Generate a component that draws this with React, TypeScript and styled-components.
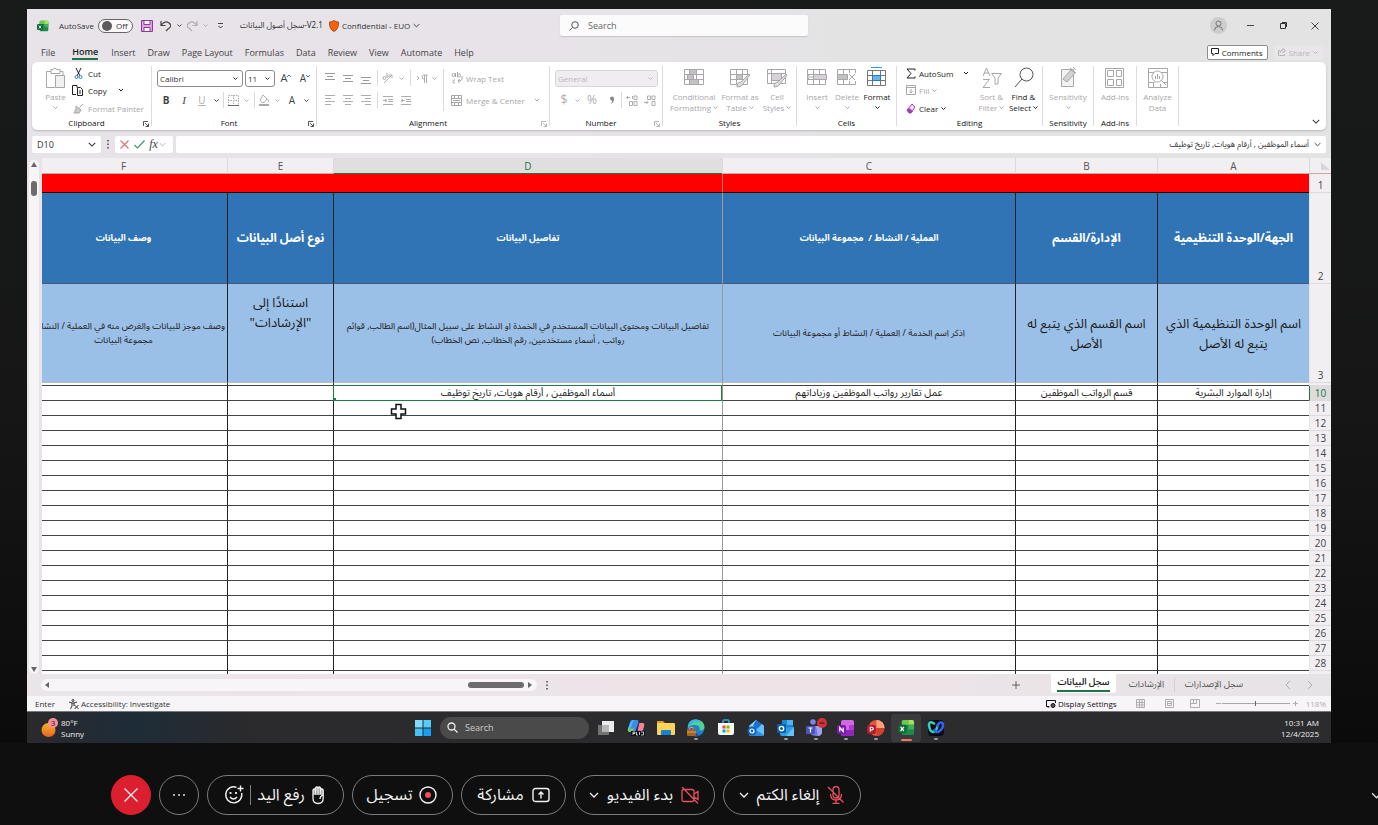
import React from "react";
import styled, { createGlobalStyle, css } from "styled-components";

const UI = `"Open Sans", "Noto Sans", "DejaVu Sans", sans-serif`;
const ARABIC = `"Noto Sans Arabic", "Noto Sans", "DejaVu Sans", sans-serif`;

const GlobalStyle = createGlobalStyle`
  *, *::before, *::after { box-sizing: border-box; }
  body { margin: 0; background: #0f0f0f; font-family: ${UI}; font-size: 8px; color: #333; }
  button, input, select { font: inherit; color: inherit; margin: 0; padding: 0; border: 0; background: none; }
  svg { display: block; flex: none; }
`;

/* ---------- page shell ---------- */
const Page = styled.div`
  height: 100vh;
  display: flex;
  flex-direction: column;
  overflow: hidden;
  background: linear-gradient(#181b1a, #161616 50%, #0b0b0b 90%, #0f0f0f 91%);
`;
const SharedScreen = styled.main`
  flex: 1;
  min-height: 0;
  margin: 9px 47px 0 27px;
  display: flex;
  flex-direction: column;
  background: linear-gradient(90deg, #e8e3e8, #e7e3e8 40%, #e3e3e3 70%);
`;

/* ---------- title bar ---------- */
const TitleBar = styled.header`
  height: 33px;
  padding-left: 10px;
  display: flex;
  align-items: center;
`;
const TitleSide = styled.div<{ $end?: boolean }>`
  flex: 1;
  display: flex;
  align-items: center;
  justify-content: ${(p) => (p.$end ? "flex-end" : "flex-start")};
`;
const AutoSave = styled.label`
  display: flex;
  align-items: center;
  gap: 4px;
  margin: 0 6px 0 10px;
`;
const Toggle = styled.span`
  position: relative;
  width: 35px;
  height: 14px;
  border: 1px solid #666;
  border-radius: 7px;
  background: #fbf9fb;
  line-height: 12px;
  padding-left: 17px;
  &::before {
    content: "";
    position: absolute;
    left: 3px;
    top: 1px;
    width: 10px;
    height: 10px;
    border-radius: 50%;
    background: #5e595e;
  }
`;
const HiddenCheck = styled.input`
  position: absolute;
  opacity: 0;
  width: 1px;
  height: 1px;
`;
const IconButton = styled.button<{ $w: number; $h?: number; $dim?: boolean }>`
  width: ${(p) => p.$w}px;
  height: ${(p) => p.$h ?? 16}px;
  display: flex;
  align-items: center;
  justify-content: center;
  color: ${(p) => (p.$dim ? "#b0acb0" : "#444")};
`;
const FileName = styled.h1`
  margin: 0 6px 0 7px;
  font: 8px ${ARABIC};
  white-space: nowrap;
`;
const LabelButton = styled.button`
  display: flex;
  align-items: center;
  gap: 3px;
  white-space: nowrap;
`;
const SearchBox = styled.label`
  width: 248px;
  height: 21px;
  display: flex;
  align-items: center;
  gap: 9px;
  padding-left: 9px;
  background: #fcfbfc;
  border-radius: 2px;
  box-shadow: 0 1px 1px #c6c2c6;
  font-size: 9px;
  input { flex: 1; outline: 0; }
  input::placeholder { color: #666; opacity: 1; }
`;

/* ---------- ribbon tabs ---------- */
const TabRow = styled.nav`
  height: 20px;
  padding: 0 8px 0 14px;
  display: flex;
  align-items: center;
  gap: 12px;
`;
const RibbonTab = styled.button<{ $active?: boolean }>`
  height: 16px;
  font-size: 9px;
  white-space: nowrap;
  color: #444;
  ${(p) =>
    p.$active &&
    css`
      font-weight: 600;
      color: #222;
      margin: 0 1px 0 5px;
      border-bottom: 2px solid #1e7145;
      padding-top: 1px;
    `}
`;
const CornerButton = styled.button<{ $dim?: boolean }>`
  height: 15px;
  padding: 0 4px 0 3px;
  display: flex;
  align-items: center;
  gap: 3px;
  border-radius: 2px;
  border: 1px solid ${(p) => (p.$dim ? "#e9e6e9" : "#8d8d8d")};
  background: ${(p) => (p.$dim ? "#e9e6e9" : "#fff")};
  color: ${(p) => (p.$dim ? "#b9b5b9" : "#222")};
`;
const CornerActions = styled.div`
  margin-left: auto;
  display: flex;
  gap: 6px;
`;

/* ---------- ribbon ---------- */
const Ribbon = styled.section`
  height: 68px;
  margin: 0 5px;
  display: flex;
  background: #fff;
  border-radius: 5px;
  box-shadow: 0 1px 2px #b9b5b9;
`;
const Group = styled.div<{ $w: number }>`
  position: relative;
  width: ${(p) => p.$w}px;
  flex: none;
  margin: 4px 0;
  border-right: 1px solid #dcdadc;
  display: flex;
  flex-direction: column;
`;
const GroupBody = styled.div<{ $pad?: number }>`
  height: 51px;
  flex: none;
  padding-left: ${(p) => p.$pad ?? 0}px;
  display: flex;
`;
const GroupName = styled.div<{ $launcher?: boolean }>`
  height: 12px;
  flex: none;
  padding-right: ${(p) => (p.$launcher ? 10 : 0)}px;
  line-height: 12px;
  color: #111;
  text-align: center;
`;
const Launcher = styled.button<{ $dim?: boolean }>`
  position: absolute;
  right: 2px;
  bottom: -1px;
  color: ${(p) => (p.$dim ? "#b5b5b5" : "#555")};
`;
const Stack = styled.div<{ $w?: number }>`
  width: ${(p) => (p.$w ? p.$w + "px" : "auto")};
  display: flex;
  flex-direction: column;
`;
const ToolRow = styled.div<{ $h?: number }>`
  height: ${(p) => p.$h ?? 22}px;
  display: flex;
  align-items: center;
`;
const BigButton = styled.button<{ $w: number; $dim?: boolean }>`
  width: ${(p) => p.$w}px;
  display: flex;
  flex-direction: column;
  align-items: center;
  line-height: 11px;
  white-space: nowrap;
  color: ${(p) => (p.$dim ? "#a9a6a9" : "#222")};
  > svg:first-child { margin: 1px 0 2px; }
`;
const Line = styled.span`
  height: 11px;
  display: flex;
  align-items: center;
  gap: 2px;
`;
const SmallButton = styled.button<{ $dim?: boolean; $h?: number }>`
  height: ${(p) => p.$h ?? 17}px;
  display: flex;
  align-items: center;
  gap: 3px;
  white-space: nowrap;
  color: ${(p) => (p.$dim ? "#a9a6a9" : "#222")};
`;
const Rule = styled.span<{ $h?: number }>`
  width: 1px;
  height: ${(p) => p.$h ?? 16}px;
  background: #dcdadc;
`;
const Picker = styled.label<{ $w: number; $dim?: boolean }>`
  width: ${(p) => p.$w}px;
  height: 17px;
  display: flex;
  align-items: center;
  padding: 0 4px 0 2px;
  border: 1px solid ${(p) => (p.$dim ? "#d9d6d9" : "#8d8a8d")};
  border-radius: 3px;
  background: ${(p) => (p.$dim ? "#efedef" : "#fff")};
  color: ${(p) => (p.$dim ? "#bbb8bb" : "#333")};
  select { flex: 1; min-width: 0; appearance: none; outline: 0; opacity: 1; }
`;
const Glyph = styled.span<{ $size?: number; $b?: boolean; $i?: boolean; $u?: boolean; $serif?: boolean }>`
  font-size: ${(p) => p.$size ?? 10}px;
  line-height: 14px;
  font-weight: ${(p) => (p.$b ? 700 : 400)};
  font-style: ${(p) => (p.$i ? "italic" : "normal")};
  text-decoration: ${(p) => (p.$u ? "underline" : "none")};
  font-family: ${(p) => (p.$serif ? `"Liberation Serif", serif` : "inherit")};
`;
const CollapseSlot = styled.div`
  margin-left: auto;
  padding: 0 6px 6px 0;
  display: flex;
  align-items: flex-end;
`;

/* ---------- formula bar ---------- */
const FormulaBar = styled.div`
  height: 28px;
  padding: 6px 5px;
  display: flex;
  align-items: center;
`;
const BarBox = styled.div<{ $w?: number }>`
  height: 17px;
  ${(p) => (p.$w ? `width: ${p.$w}px;` : "flex: 1;")}
  display: flex;
  align-items: center;
  padding: 0 5px;
  background: #fff;
  border-radius: 2px;
  input { flex: 1; min-width: 0; outline: 0; }
`;
const NameInput = styled.input`
  font-size: 9px;
`;
const FormulaInput = styled.input`
  font: 8px ${ARABIC};
  padding-right: 5px;
`;

/* ---------- sheet ---------- */
const Sheet = styled.section`
  flex: 1;
  min-height: 0;
  display: flex;
  overflow: hidden;
`;
const VScroll = styled.div`
  width: 15px;
  flex: none;
  padding: 2px 3px 0 2px;
`;
const VTrack = styled.div`
  height: 100%;
  display: flex;
  flex-direction: column;
  align-items: center;
  padding: 1px 0;
  border-radius: 5px;
  background: #f6f4f7;
`;
const VThumb = styled.div`
  width: 6px;
  height: 15px;
  margin: 13px 0 auto;
  border-radius: 3px;
  background: #6f6b6f;
`;
const GridPane = styled.div`
  flex: 1;
  min-width: 0;
`;
const Grid = styled.table`
  width: 100%;
  table-layout: fixed;
  border-collapse: separate;
  border-spacing: 0;
  background: #fff;
  font-family: ${ARABIC};
`;
const Col = styled.col<{ $w?: number }>`
  ${(p) => (p.$w ? `width: ${p.$w}px;` : "")}
`;
const HIDDEN_PART = 22;
const Letter = styled.th<{ $on?: boolean }>`
  height: 16px;
  padding: 1px 0 0;
  font: 10px/14px "Open Sans", sans-serif;
  color: ${(p) => (p.$on ? "#217346" : "#555")};
  background: ${(p) => (p.$on ? "#e0dfe0" : "#f1eff1")};
  border-left: 1px solid #dcdadc;
  border-bottom: 1px solid ${(p) => (p.$on ? "#217346" : "#c9a9a9")};
  &:last-child { border-left: 0; padding-right: ${HIDDEN_PART}px; }
`;
const Num = styled.th<{ $on?: boolean }>`
  padding: 0;
  vertical-align: bottom;
  font: 10px/14px "Open Sans", sans-serif;
  color: ${(p) => (p.$on ? "#217346" : "#444")};
  background: ${(p) => (p.$on ? "#dcdcdc" : "#f1eff1")};
  border-left: 1px solid ${(p) => (p.$on ? "#217346" : "#e6e3e6")};
  border-bottom: 1px solid #dedbde;
`;
type Tone = "red" | "head" | "note" | "gap" | "plain";
const toneHeight: Record<Tone, number> = { red: 19, head: 91, note: 99, gap: 3, plain: 15 };
const Cell = styled.td<{ $tone: Tone; $large?: boolean; $top?: boolean; $frozen?: boolean }>`
  position: relative;
  height: ${(p) => toneHeight[p.$tone]}px;
  padding: 0;
  overflow: hidden;
  white-space: pre;
  text-align: center;
  vertical-align: ${(p) => (p.$top ? "top" : "middle")};
  border-left: 1px solid ${(p) => (p.$frozen ? "#999" : "#222")};
  border-bottom: 1px solid #444;
  font-size: 9px;
  line-height: 14px;
  color: #1c1c1c;
  &:last-child { border-left: 0; }
  ${(p) => p.$tone === "red" && css`background: #fe0000; border-color: #200; ${p.$frozen ? "border-left-color: #c77;" : "border-left: 0;"}`}
  ${(p) => p.$tone === "head" && css`background: #3074b5; color: #fff; font-weight: 700; padding-top: 2px; border-bottom-color: #4a5a70; &:last-child { padding-right: ${HIDDEN_PART}px; }`}
  ${(p) => p.$tone === "note" && css`background: #9bc0e7; padding-top: 1px; border-bottom-color: #bbb;`}
  ${(p) => p.$large && css`font-size: ${p.$tone === "head" ? 12 : 13}px; line-height: 20px;`}
  ${(p) => p.$top && css`padding-top: 9px;`}
  ${(p) => p.$tone === "plain" && css`font-size: 10px; line-height: 12px; padding-bottom: 1px; overflow: visible;`}
`;
const Selection = styled.span`
  position: absolute;
  inset: -1px 0 -1px -1px;
  z-index: 1;
  border: 1px solid #1f7d48;
  &::after {
    content: "";
    position: absolute;
    left: -1px;
    bottom: -1px;
    width: 3px;
    height: 3px;
    background: #1f7d48;
  }
`;
const Pointer = styled.svg`
  position: absolute;
  left: 56px;
  top: 2px;
  z-index: 1;
`;
const TextLine = styled.span<{ $kind?: "start" | "shifted" }>`
  display: block;
  text-align: ${(p) => (p.$kind === "start" ? "right" : "center")};
  padding-right: ${(p) => (p.$kind === "start" ? 2 : p.$kind === "shifted" ? HIDDEN_PART : 0)}px;
`;

/* ---------- bottom bars of the workbook ---------- */
const SheetBar = styled.div`
  height: 22px;
  padding: 0 10px 0 14px;
  display: flex;
  align-items: center;
  background: linear-gradient(90deg, #e9e5e9, #eee4e8 60%, #e6e3e6);
  color: #555;
`;
const HTrack = styled.div`
  width: 496px;
  height: 12px;
  display: flex;
  align-items: center;
  padding: 0 4px 0 3px;
  border-radius: 6px;
  background: #f7f5f8;
`;
const HThumb = styled.div`
  width: 56px;
  height: 6px;
  margin: 0 3px 0 auto;
  border-radius: 3px;
  background: #6f6b6f;
`;
const SheetTabs = styled.div`
  margin-left: auto;
  height: 100%;
  display: flex;
  align-items: center;
`;
const SheetTab = styled.button<{ $active?: boolean; $last?: boolean; $w: number }>`
  width: ${(p) => p.$w}px;
  height: 14px;
  font: 9px/14px ${ARABIC};
  white-space: nowrap;
  border-right: ${(p) => (p.$last ? 0 : "1px solid #d5cfd4")};
  ${(p) =>
    p.$active &&
    css`
      height: 19px;
      align-self: flex-start;
      margin: 0 3px 0 0;
      padding: 0 6px;
      background: #fff;
      border: 0;
      border-radius: 0 0 3px 3px;
      font-weight: 600;
      color: #222;
      span { display: block; border-bottom: 2px solid #217346; }
    `}
`;
const SheetArrows = styled.div`
  margin-left: 24px;
  display: flex;
`;
const StatusBar = styled.div`
  height: 15px;
  padding: 0 5px 0 8px;
  display: flex;
  align-items: center;
  background: #f7f5f8;
  color: #333;
`;
const StatusItem = styled.button<{ $ml?: number; $strong?: boolean }>`
  display: flex;
  align-items: center;
  gap: 2px;
  margin-left: ${(p) => p.$ml ?? 0}px;
  white-space: nowrap;
  color: ${(p) => (p.$strong ? "#111" : "inherit")};
`;
const StatusEnd = styled.div`
  margin-left: auto;
  display: flex;
  align-items: center;
  color: #b0adb0;
`;
const ZoomRange = styled.input`
  width: 68px;
  height: 9px;
  appearance: none;
  background: linear-gradient(#a9a6a9, #a9a6a9) center / 100% 1px no-repeat;
  &::-webkit-slider-thumb { appearance: none; width: 1px; height: 5px; background: #666; }
`;

/* ---------- taskbar ---------- */
const Taskbar = styled.footer`
  height: 32px;
  display: grid;
  grid-template-columns: 1fr auto 1fr;
  align-items: center;
  padding: 0 12px 0 13px;
  border-top: 1px solid #77797b;
  background: linear-gradient(90deg, #2b2a2c, #1e2c38 8%, #2b2a2c 17%, #2c2b2d);
  color: #eee;
  line-height: 11px;
`;
const Weather = styled.button`
  display: flex;
  align-items: center;
  gap: 2px;
  text-align: left;
`;
const Dock = styled.div`
  display: flex;
  align-items: center;
`;
const TaskSearch = styled.label`
  width: 149px;
  height: 22px;
  margin: 0 2px;
  display: flex;
  align-items: center;
  gap: 7px;
  padding-left: 7px;
  border-radius: 11px;
  background: #4a4a4b;
  font-size: 9px;
  input { width: 100px; outline: 0; }
  input::placeholder { color: #ccc; opacity: 1; }
`;
const DockButton = styled.button<{ $run?: boolean; $on?: boolean }>`
  position: relative;
  width: 30px;
  height: 28px;
  display: flex;
  align-items: center;
  justify-content: center;
  ${(p) => p.$on && css`background: #3b3a3c; border-radius: 3px;`}
  ${(p) =>
    (p.$run || p.$on) &&
    css`
      &::after {
        content: "";
        position: absolute;
        bottom: ${p.$on ? 1 : 2}px;
        width: ${p.$on ? 11 : 4}px;
        height: 2px;
        border-radius: 1px;
        background: ${p.$on ? "#e87b62" : "#9a9a9a"};
      }
    `}
`;
const Clock = styled.div`
  text-align: right;
`;

/* ---------- call controls ---------- */
const CallBar = styled.div`
  height: 82px;
  padding: 32px 0 10px 111px;
  display: flex;
  gap: 8px;
  background: #0f0f0f;
`;
const Pill = styled.button<{ $w: number; $danger?: boolean; $tight?: boolean }>`
  width: ${(p) => p.$w}px;
  height: 40px;
  display: flex;
  align-items: center;
  justify-content: center;
  gap: ${(p) => (p.$tight ? 6 : 8)}px;
  padding-right: ${(p) => (p.$tight ? 2 : 0)}px;
  border: 1px solid ${(p) => (p.$danger ? "#dc1f2e" : "#7c7c7c")};
  border-radius: 20px;
  background: ${(p) => (p.$danger ? "#dc1f2e" : "transparent")};
  color: #f2f2f2;
  font: 16px/24px ${ARABIC};
  white-space: nowrap;
`;
const PillRule = styled.span`
  width: 1px;
  height: 20px;
  background: #7c7c7c;
`;
const Expand = styled.button`
  margin: 0 -4px 0 auto;
  color: #ddd;
`;

/* ---------- drawings ---------- */
type IconProps = { w: number; h: number; box?: string; sw?: number; children: React.ReactNode };
const Icon = ({ w, h, box, sw = 1, children }: IconProps) => (
  <svg width={w} height={h} viewBox={box ?? `0 0 ${w} ${h}`} fill="none" stroke="currentColor" strokeWidth={sw} aria-hidden="true">
    {children}
  </svg>
);
const Chev = ({ w = 5 }: { w?: number }) => (
  <svg width={w} height={Math.ceil(w * 0.6)} viewBox="0 0 10 6" fill="none" stroke="currentColor" strokeWidth={w > 6 ? 1.3 : 2} aria-hidden="true">
    <path d="M1 1l4 4 4-4" />
  </svg>
);
const Arrow = ({ dir }: { dir: "up" | "down" | "left" | "right" }) => {
  const d = { up: "M0 6L3 1l3 5z", down: "M0 1l3 5 3-5z", left: "M5 0L1 3l4 3z", right: "M1 0l4 3-4 3z" }[dir];
  const flat = dir === "left" || dir === "right";
  return (
    <Icon w={6} h={flat ? 6 : 7}><path d={d} fill="#666" stroke="none" /></Icon>
  );
};
const LauncherIcon = () => (
  <Icon w={6} h={6}><path d="M.5 5V.5H5M2 2l3.5 3.5M5.5 2.500v3h-3" /></Icon>
);
const Lines = ({ widths, offs }: { widths: number[]; offs: number[] }) => (
  <Icon w={11} h={11}>
    {widths.map((w, i) => (
      <path key={i} d={`M${offs[i]} ${i * 3 + 0.5}h${w}`} />
    ))}
  </Icon>
);
const TableGlyph = ({ fill = "#c4c1c4" }: { fill?: string }) => (
  <>
    <path d="M1.5 2.5h17v15h-17zM1.5 7.5h17M1.5 12.5h17M7.5 2.5v15M13.5 2.5v15" />
    <path d="M7.5 7.5h6v5h-6z" fill={fill} />
  </>
);
const ExcelLogo = ({ s }: { s: number }) => (
  <svg width={s} height={s} viewBox="0 0 18 18" aria-hidden="true">
    <rect x="4" y="1" width="13" height="16" rx="2" fill="#1d8b4b" />
    <path d="M4 6V3q0-2 2-2h5v5z" fill="#6ccb4b" />
    <path d="M11 1h4q2 0 2 2v3h-6z" fill="#a5e35e" />
    <path d="M11 6h6v5h-6z" fill="#3db058" />
    <rect x="0" y="6" width="9" height="9" rx="2" fill="#0f6a39" />
    <path d="M2.7 8.300l3.6 4.400M6.3 8.300l-3.6 4.400" stroke="#fff" strokeWidth="1.3" />
  </svg>
);
const dockIcons = {
  start: (
    <svg width="16" height="16" viewBox="0 0 16 16"><path d="M0 0h7.500v7.500H0z" fill="#7fdcff" /><path d="M8.500 0H16v7.500H8.500z" fill="#53cdfb" /><path d="M0 8.500h7.500V16H0z" fill="#45c1f9" /><path d="M8.500 8.500H16V16H8.500z" fill="#169ff0" /></svg>
  ),
  tasks: (
    <svg width="18" height="16" viewBox="0 0 18 16"><path d="M5 1h12v11H5z" fill="#ececec" /><path d="M1 5h11v10H1z" fill="#7b7b7b" opacity=".9" /><path d="M5 5h7v7H5z" fill="#b5b5b5" /></svg>
  ),
  copilot: (
    <svg width="18" height="18" viewBox="0 0 18 18">
      <path d="M5 1h5q2 0 1.500 2L9 11q-.6 2-2.500 2H3q-3 0-2-3l2-7q.5-2 2-2z" fill="#3a8df0" />
      <path d="M4.500 3Q5 1 7 1 5 3 4.500 6T1 10.500q-.3 0 0-1z" fill="#4fd0e8" />
      <path d="M1 9.500l6 0q-1 3.500-3.500 3.500Q0 13 1 9.500z" fill="#7cc85a" />
      <path d="M12 4h3q3 0 2 3l-2 6q-.6 2-2.500 2H8q2 0 2.500-2z" fill="#d95fd0" />
      <path d="M13 4h2q3 0 2 3l-1 4h-5z" fill="#f08a8a" />
      <rect x="4" y="12" width="14" height="5" fill="#111" />
      <path d="M6 16v-3h2v1.500H6M9.500 13v3h1.500M12.500 13v3M14 13h2.500v3H14" stroke="#eee" strokeWidth=".8" fill="none" />
    </svg>
  ),
  folder: (
    <svg width="18" height="16" viewBox="0 0 18 16"><path d="M0 1h6l2 2h9v6H0z" fill="#e59d18" /><rect y="3" width="18" height="12" rx="1" fill="#fbd25a" /><path d="M4 15v-4q0-1 1-1h8q1 0 1 1v4z" fill="#1583d3" /></svg>
  ),
  edge: (
    <svg width="18" height="18" viewBox="0 0 18 18"><circle cx="9" cy="9" r="8.500" fill="#1c7fd0" /><path d="M1 7q1-6.500 8-6.500 8 .5 8.500 7.500-.5 4-5 3.500 1-5-4-5.500Q3 5.500 1 9z" fill="#4fd38f" /><path d="M1 7Q2 1 8 .6q4 0 6 2.400Q7 2 4 6 2 6.500 1 9z" fill="#35b7e8" /><path d="M6 9q0 5 6 7-3 2-7 0-3-3-1-7z" fill="#0d4d96" /><rect x="0" y="10" width="9" height="7" rx="1" fill="#a86425" /><path d="M3 10V8.500h3V10M0 13h9" stroke="#e0a15e" fill="none" /></svg>
  ),
  store: (
    <svg width="16" height="17" viewBox="0 0 16 17"><path d="M5 5V2q0-1 1-1h4q1 0 1 1v3" stroke="#28a8e8" strokeWidth="1.5" fill="none" /><path d="M0 4h16v10q0 2-2 2H2q-2 0-2-2z" fill="#f6f6f6" /><path d="M4.500 6.500h3v3h-3z" fill="#f04e26" /><path d="M8.500 6.500h3v3h-3z" fill="#7fba00" /><path d="M4.500 10.500h3v3h-3z" fill="#00a4ef" /><path d="M8.500 10.500h3v3h-3z" fill="#ffb900" /></svg>
  ),
  mailNew: (
    <svg width="18" height="18" viewBox="0 0 18 18"><path d="M2 7l7-6 8 6v9q0 1-1 1H3q-1 0-1-1z" fill="#2d8fe6" /><path d="M2 7l7-6 3 2.500L5 9z" fill="#8fd0fa" /><path d="M9 1l8 6-5 4-6-4z" fill="#1b6fd0" /><path d="M17 7v9l-8-5 6-6z" fill="#69c0f8" /><circle cx="5" cy="12" r="4.500" fill="#1160b7" /><circle cx="5" cy="12" r="2" fill="none" stroke="#fff" strokeWidth="1.2" /></svg>
  ),
  outlook: (
    <svg width="18" height="18" viewBox="0 0 18 18"><path d="M5 1h11v9H5z" fill="#1c86d8" /><path d="M10 1h6v5h-6z" fill="#48b5ef" /><path d="M3 9l14-1v8q0 1-1 1H5q-2 0-2-2z" fill="#2ea0e8" /><path d="M17 8v9H9z" fill="#62c4f3" /><rect y="5" width="9" height="9" rx="1" fill="#0f5fa8" /><circle cx="4.500" cy="9.500" r="2.200" fill="none" stroke="#fff" strokeWidth="1.3" /></svg>
  ),
  teams: (
    <svg width="22" height="20" viewBox="0 0 22 20"><circle cx="8" cy="4" r="2.800" fill="#7b83eb" /><path d="M4 8h13v6q0 4-5 4T4 15z" fill="#7378dd" /><path d="M11 8h6v6q0 3-4 4z" fill="#9da2f2" /><rect x="1" y="8" width="9" height="8" rx="1" fill="#4b53bc" /><path d="M3.500 10h4M5.500 10v4.500" stroke="#fff" strokeWidth="1.2" /><circle cx="17" cy="5" r="5" fill="#d13438" /><path d="M14.500 5h5" stroke="#4a1010" strokeWidth="1.2" /></svg>
  ),
  onenote: (
    <svg width="18" height="18" viewBox="0 0 18 18"><rect x="4" y="1" width="13" height="16" rx="2" fill="#d268e6" /><path d="M12 6h5v5h-5z" fill="#b03bd0" /><path d="M4 11h13v4q0 2-2 2H6q-2 0-2-2z" fill="#8f28b4" /><rect x="0" y="6" width="9" height="9" rx="2" fill="#7719aa" /><path d="M2.800 12.500v-4l3.400 4v-4" stroke="#fff" strokeWidth="1.2" fill="none" /></svg>
  ),
  powerpoint: (
    <svg width="18" height="18" viewBox="0 0 18 18"><circle cx="9.500" cy="9" r="8" fill="#e8553a" /><path d="M9.500 1a8 8 0 018 8h-8z" fill="#ffa27a" /><path d="M17.500 9a8 8 0 01-8 8V9z" fill="#d13f33" /><rect x="0" y="6" width="9" height="9" rx="2" fill="#b01e2e" /><path d="M3.300 12.800V8.300h1.500q1.400 0 1.400 1.300T4.800 11H3.300" stroke="#fff" strokeWidth="1.1" fill="none" /></svg>
  ),
  webex: (
    <svg width="18" height="18" viewBox="0 0 18 18">
      <rect x="1" y="1" width="16" height="16" rx="4" fill="#0b0b10" />
      <path d="M7 4.500Q2 1.500 2 6q.5 6.500 4 7 3 0 4.500-6" stroke="#35cdbb" strokeWidth="2.6" fill="none" strokeLinecap="round" />
      <path d="M7.500 11q1.500 3 4.500 1.500Q16 10 16 6q0-3-2.500-2.500-2 .5-3 3.500" stroke="#2f63f2" strokeWidth="2.600" fill="none" strokeLinecap="round" />
    </svg>
  ),
};

/* ---------- data ---------- */
const ribbonTabs = ["File", "Home", "Insert", "Draw", "Page Layout", "Formulas", "Data", "Review", "View", "Automate", "Help"];
const letters = ["A", "B", "C", "D", "E", "F"];
const heads = [
  { text: "الجهة/الوحدة التنظيمية", large: true },
  { text: "الإدارة/القسم", large: true },
  { text: "العملية / النشاط /  مجموعة البيانات" },
  { text: "تفاصيل البيانات" },
  { text: "نوع أصل البيانات", large: true },
  { text: "وصف البيانات" },
];
type NoteLine = { text: string; kind?: "start" | "shifted" };
const notes: { lines: NoteLine[]; large?: boolean; top?: boolean }[] = [
  { lines: [{ text: "اسم الوحدة التنظيمية الذي" }, { text: "يتبع له الأصل" }], large: true },
  { lines: [{ text: "اسم القسم الذي يتبع له" }, { text: "الأصل" }], large: true },
  { lines: [{ text: "اذكر اسم الخدمة / العملية / النشاط أو مجموعة البيانات" }] },
  { lines: [{ text: "تفاصيل البيانات ومحتوى البيانات المستخدم في الخمدة او النشاط على سبيل المثال(اسم الطالب, قوائم" }, { text: "رواتب , أسماء مستخدمين, رقم الخطاب, نص الخطاب)" }] },
  { lines: [{ text: "استنادًا إلى" }, { text: "\"الإرشادات\"" }], large: true, top: true },
  { lines: [{ text: "وصف موجز للبيانات والغرض منه في العملية / النشاط", kind: "start" }, { text: "مجموعة البيانات", kind: "shifted" }] },
];
const record = ["إدارة الموارد البشرية", "قسم الرواتب الموظفين", "عمل تقارير رواتب الموظفين وزياداتهم", "أسماء الموظفين , أرقام هويات, تاريخ توظيف", "", ""];
const emptyRows = Array.from({ length: 19 }, (_, i) => 11 + i);

/* ---------- ribbon sections ---------- */
const ClipboardGroup = () => (
  <Group $w={120}>
    <GroupBody $pad={7}>
      <BigButton $w={33} $dim>
        <Icon w={21} h={22}><path d="M6 4.500H1.500v16H10M15 4.500h3V8M6 2.500h2q2-3 4 0h3v4H6z" /><path d="M10.500 8.500h9v12h-9z" fill="#f1f0f1" /></Icon>
        <Line>Paste</Line>
        <Line><Chev /></Line>
      </BigButton>
      <Stack>
        <SmallButton $h={14}><Icon w={13} h={11}><path d="M4 0l4 8M9 0L5 8" /><path d="M6 9a1.500 1.500 0 11-3 0 1.500 1.500 0 013 0zM10 9a1.500 1.500 0 11-3 0 1.500 1.500 0 013 0z" stroke="#2b88c8" /></Icon>Cut</SmallButton>
        <SmallButton $h={20}><Icon w={13} h={11}><path d="M5 2.500V.500H.500v9H4M5.500 2.500h3l2 2v6h-5zM7 6h2M7 8h2" /></Icon>Copy<Icon w={15} h={4}><path d="M9 1l2 2 2-2" /></Icon></SmallButton>
        <SmallButton $dim><Icon w={13} h={11}><path d="M11 1L7.500 4.500M4 3l5 4-2 3H2L4 6z" fill="#ccc" /></Icon>Format Painter</SmallButton>
      </Stack>
    </GroupBody>
    <GroupName $launcher>Clipboard</GroupName>
    <Launcher aria-label="Clipboard options"><LauncherIcon /></Launcher>
  </Group>
);

const FontGroup = () => (
  <Group $w={165}>
    <GroupBody $pad={5}>
      <Stack>
        <ToolRow $h={24}>
          <Picker $w={86}><select aria-label="Font"><option>Calibri</option></select><Chev /></Picker>
          <IconButton $w={2} />
          <Picker $w={30}><select aria-label="Font size"><option>11</option></select><Chev /></Picker>
          <IconButton $w={22}><Glyph $size={11}>A</Glyph><Icon w={4} h={8}><path d="M0 3l2-2 2 2" stroke="#2b88c8" /></Icon></IconButton>
          <IconButton $w={16}><Glyph $size={10}>A</Glyph><Icon w={4} h={8}><path d="M0 1l2 2 2-2" stroke="#2b88c8" /></Icon></IconButton>
        </ToolRow>
        <ToolRow $h={20}>
          <IconButton $w={18} aria-label="Bold"><Glyph $b>B</Glyph></IconButton>
          <IconButton $w={18} aria-label="Italic"><Glyph $i $serif $size={11}>I</Glyph></IconButton>
          <IconButton $w={18} $dim aria-label="Underline"><Glyph $u>U</Glyph></IconButton>
          <IconButton $w={10}><Chev /></IconButton>
          <IconButton $w={4}><Rule /></IconButton>
          <IconButton $w={16} $dim><Icon w={11} h={11}><path d="M.5 .5h10v10H.5zM5.500 0v11M0 5.500h11" strokeDasharray="1.5 1" /><path d="M0 10.500h11" stroke="#666" /></Icon></IconButton>
          <IconButton $w={11} $dim><Chev /></IconButton>
          <IconButton $w={4}><Rule /></IconButton>
          <IconButton $w={16} $dim><Icon w={12} h={12}><path d="M5 1l4 4-3 3.500H4L2 6zM9 5q2 1 1.500 3" /><path d="M1 10h10v2H1z" fill="#aaa" stroke="none" /></Icon></IconButton>
          <IconButton $w={10} $dim><Chev /></IconButton>
          <IconButton $w={20}><Glyph>A</Glyph></IconButton>
          <IconButton $w={8}><Chev /></IconButton>
        </ToolRow>
      </Stack>
    </GroupBody>
    <GroupName $launcher>Font</GroupName>
    <Launcher aria-label="Font options"><LauncherIcon /></Launcher>
  </Group>
);

const AlignmentGroup = () => (
  <Group $w={233}>
    <GroupBody $pad={4}>
      <Stack $w={122}>
        <ToolRow $h={24}>
          <IconButton $w={18} $dim><Icon w={11} h={11}><path d="M0 .5h10M2 3.500h6M0 6.500h10" stroke="#999" /></Icon></IconButton>
          <IconButton $w={18} $dim><Icon w={11} h={11}><path d="M0 2.500h10M2 5.500h6M0 8.500h10" stroke="#999" /></Icon></IconButton>
          <IconButton $w={18} $dim><Icon w={11} h={11}><path d="M0 4.500h10M2 7.500h6M0 10.500h10" stroke="#999" /></Icon></IconButton>
          <IconButton $w={4}><Rule /></IconButton>
          <IconButton $w={18} $dim><Icon w={12} h={11}><path d="M2 10L10 2M7 2h3v3M1 5a1.500 1.500 0 103 0 1.500 1.500 0 10-3 0M5 0v5M5 3q2-1 2 1" /></Icon></IconButton>
          <IconButton $w={9} $dim><Chev /></IconButton>
          <IconButton $w={9}><Rule /></IconButton>
          <IconButton $w={14} $dim><Icon w={11} h={9}><path d="M0 2l2 2-2 2M9.500 9V1M7.500 9V1M10.500 1H7q-2 0-2 2t2 2" /></Icon></IconButton>
          <IconButton $w={10} $dim><Chev /></IconButton>
        </ToolRow>
        <ToolRow $h={20}>
          <IconButton $w={18} $dim><Lines widths={[10, 6, 10, 6]} offs={[0, 0, 0, 0]} /></IconButton>
          <IconButton $w={18} $dim><Lines widths={[10, 6, 10, 6]} offs={[0, 2, 0, 2]} /></IconButton>
          <IconButton $w={18} $dim><Lines widths={[10, 6, 10, 6]} offs={[0, 4, 0, 4]} /></IconButton>
          <IconButton $w={4}><Rule /></IconButton>
          <IconButton $w={18} $dim><Icon w={11} h={9}><path d="M0 .5h10M5 3.500h5M5 5.500h5M0 8.500h10M0 4.500h4M2 3l2 1.500L2 6" /></Icon></IconButton>
          <IconButton $w={18} $dim><Icon w={11} h={9}><path d="M0 .5h10M5 3.500h5M5 5.500h5M0 8.500h10M0 4.500h4M2 3L0 4.500 2 6" /></Icon></IconButton>
        </ToolRow>
      </Stack>
      <ToolRow $h={48}><Rule $h={42} /></ToolRow>
      <Stack>
        <ToolRow $h={24}><IconButton $w={7} /><SmallButton $dim><Icon w={12} h={12}><path d="M1 3a1.500 1.500 0 103 0 1.500 1.500 0 10-3 0M4.500 1v4M6.500 0v5M6.500 3.500a1.500 1.500 0 103 0 1.500 1.500 0 10-3 0M4 8a1.500 1.500 0 10-1 3h1M11 4v3q0 2-4 2M8.500 7L7 9l1.500 2" /></Icon>Wrap Text</SmallButton></ToolRow>
        <ToolRow $h={20}><IconButton $w={7} /><SmallButton $dim><Icon w={12} h={11}><path d="M.5 .5h10v10H.5zM.5 3.500h10M.5 7.500h10M3.500 0v3M7.500 0v3M3.500 8v3M7.500 8v3M2 5.500h7" /></Icon>Merge &amp; Center<Icon w={15} h={4}><path d="M7 1l2 2 2-2" /></Icon></SmallButton></ToolRow>
      </Stack>
    </GroupBody>
    <GroupName $launcher>Alignment</GroupName>
    <Launcher $dim aria-label="Alignment options"><LauncherIcon /></Launcher>
  </Group>
);

const NumberGroup = () => (
  <Group $w={113}>
    <GroupBody $pad={5}>
      <Stack>
        <ToolRow $h={24}><Picker $w={103} $dim><select aria-label="Number format"><option>General</option></select><Chev /></Picker></ToolRow>
        <ToolRow $h={20}>
          <IconButton $w={18} $dim><Glyph $size={12}>$</Glyph></IconButton>
          <IconButton $w={8} $dim><Chev /></IconButton>
          <IconButton $w={22} $dim><Glyph $size={12}>%</Glyph></IconButton>
          <IconButton $w={18}><Icon w={6} h={9}><path d="M1 2.500a2 2 0 114 0q0 4-3 5.500 1-2 1-3.500-2 0-2-2z" fill="#888" stroke="none" /></Icon></IconButton>
          <Rule />
          <IconButton $w={19} $dim><Icon w={12} h={11}><path d="M4 2.500H0M2 1L.5 2.500 2 4M6.500 1v3M8 1h3v3.500H8zM3.500 6.500h3v4h-3zM8 6.500h3v4H8z" /></Icon></IconButton>
          <IconButton $w={18} $dim><Icon w={12} h={11}><path d="M0 7.500h4M2.500 6L4 7.500 2.500 9M3.500 1h3v3.500h-3zM8 1h3v3.500H8zM8 6.500h3v4H8z" /></Icon></IconButton>
        </ToolRow>
      </Stack>
    </GroupBody>
    <GroupName $launcher>Number</GroupName>
    <Launcher $dim aria-label="Number options"><LauncherIcon /></Launcher>
  </Group>
);

const Brush = () => <path d="M20 7l-8 8q-4 0-4 5 5 0 6-3l7-9z" fill="#ddd" />;

const Toolbar = () => (
  <Ribbon aria-label="Home ribbon">
    <ClipboardGroup />
    <FontGroup />
    <AlignmentGroup />
    <NumberGroup />
    <Group $w={134}>
      <GroupBody $pad={5}>
        <BigButton $w={52} $dim>
          <Icon w={20} h={22}><path d="M.5 2.500h19v15H.5zM.5 7.500h19M.5 12.500h19M5.500 2.500v15M12.500 2.500v15" /><path d="M5.500 2.500h7v5h-7zM3.500 7.500h6v5h-6zM5.500 12.500h9v5h-9z" fill="#c4c1c4" /></Icon>
          <Line>Conditional</Line><Line>Formatting<Chev /></Line>
        </BigButton>
        <BigButton $w={40} $dim>
          <Icon w={22} h={22}><TableGlyph /><Brush /></Icon>
          <Line>Format as</Line><Line>Table<Chev /></Line>
        </BigButton>
        <BigButton $w={34} $dim>
          <Icon w={22} h={22}><path d="M1.5 2.500h18v14h-18zM1.5 6.500h18M5.500 2.500v14" /><path d="M5.500 6.500h10v7h-10z" fill="#d4d2d4" /><Brush /></Icon>
          <Line>Cell</Line><Line>Styles<Chev /></Line>
        </BigButton>
      </GroupBody>
      <GroupName>Styles</GroupName>
    </Group>
    <Group $w={100}>
      <GroupBody $pad={5}>
        <BigButton $w={30} $dim>
          <Icon w={22} h={22}><path d="M1.5 2.500h18v15h-18zM1.5 7.500h18M1.5 12.500h18M7.500 2.500v15M13.500 2.500v15" /><path d="M7.500 7.500h13v5h-13z" fill="#d4d2d4" /><path d="M8 10H1M4 7l-3 3 3 3" /></Icon>
          <Line>Insert</Line><Line><Chev /></Line>
        </BigButton>
        <BigButton $w={30} $dim>
          <Icon w={22} h={22}><path d="M1.5 2.500h18v15h-18zM1.5 7.500h18M1.5 12.500h18M7.500 2.500v15M13.500 2.500v15" /><path d="M1.5 7.500h10v5h-10z" fill="#c4c1c4" /><path d="M12 6h9v8h-9z" fill="#fff" stroke="none" /><path d="M13 7l6 6M19 7l-6 6" /></Icon>
          <Line>Delete</Line><Line><Chev /></Line>
        </BigButton>
        <BigButton $w={30}>
          <Icon w={22} h={22}><path d="M1.5 3.500h18v15h-18zM1.5 8.500h18M1.5 13.500h18M6.500 3.500v15M14.500 3.500v15" stroke="#777" /><path d="M6.500 8.500h8v5h-8z" fill="#6db3e8" stroke="#1f7dc4" /><path d="M5 .5h11" stroke="#2b9be0" /></Icon>
          <Line>Format</Line><Line><Chev /></Line>
        </BigButton>
      </GroupBody>
      <GroupName>Cells</GroupName>
    </Group>
    <Group $w={146}>
      <GroupBody $pad={9}>
        <Stack $w={71}>
          <SmallButton $h={14}><Icon w={10} h={11}><path d="M9 2.500V1H1l4 4.500L1 10h8V8.500" /></Icon>AutoSum<Icon w={15} h={4}><path d="M8 1l2 2 2-2" /></Icon></SmallButton>
          <SmallButton $dim $h={20}><Icon w={10} h={10}><path d="M.5 .5h9v9H.5zM.5 2.500h9M5 4v4M3.500 6.500L5 8l1.500-1.500" /></Icon>Fill<Chev /></SmallButton>
          <SmallButton><Icon w={10} h={11}><path d="M1 7l5-6 3 3-4 6H3z" stroke="#a33fb5" fill="#f3dcf7" /><path d="M1 7l2-2 4 3-2 2H3z" fill="#a33fb5" stroke="none" /></Icon>Clear<Chev /></SmallButton>
        </Stack>
        <BigButton $w={29} $dim>
          <Icon w={20} h={22}><path d="M1 9l3.500-8L8 9M2 6h5M1 12.500h6.500L1 20.500h7M9.500 6.500h10L16 11v6h-3v-6z" /></Icon>
          <Line>Sort &amp;</Line><Line>Filter<Chev /></Line>
        </BigButton>
        <BigButton $w={35}>
          <Icon w={20} h={22}><circle cx="12.500" cy="7.500" r="6.500" stroke="#555" /><path d="M8 12l-7 8" stroke="#555" /></Icon>
          <Line>Find &amp;</Line><Line>Select<Chev /></Line>
        </BigButton>
      </GroupBody>
      <GroupName>Editing</GroupName>
    </Group>
    <Group $w={51}>
      <GroupBody>
        <BigButton $w={50} $dim>
          <Icon w={20} h={22}><path d="M3.500 2.500h12v17h-12z" fill="#f3f2f3" /><path d="M5 12l8-9 4 3-8 9zM12 1l6 5M15 0l3 3" fill="#d4d2d4" /></Icon>
          <Line>Sensitivity</Line><Line><Chev /></Line>
        </BigButton>
      </GroupBody>
      <GroupName>Sensitivity</GroupName>
    </Group>
    <Group $w={43}>
      <GroupBody>
        <BigButton $w={42} $dim>
          <Icon w={20} h={22}><path d="M.5 1.500h18v19H.5zM2.500 3.500h6v6h-6zM11.500 3.500h5v6h-5zM2.500 12.500h6v6h-6zM11.500 12.500h5v6h-5z" /></Icon>
          <Line>Add-ins</Line>
        </BigButton>
      </GroupBody>
      <GroupName>Add-ins</GroupName>
    </Group>
    <Group $w={42}>
      <GroupBody>
        <BigButton $w={42} $dim>
          <Icon w={20} h={22}><path d="M.5 1.500h19v19H.5zM.5 5.500h19M.5 15.500h6M5.500 15v5M12.500 17v3M16 15.500h4" /><circle cx="9.500" cy="9.500" r="5.500" fill="#fff" /><path d="M13 13l5 5M7.500 12V9M9.500 12V7M11.500 12V9" /></Icon>
          <Line>Analyze</Line><Line>Data</Line>
        </BigButton>
      </GroupBody>
    </Group>
    <CollapseSlot><button aria-label="Collapse ribbon"><Chev w={8} /></button></CollapseSlot>
  </Ribbon>
);

const Spreadsheet = () => (
  <Sheet>
    <VScroll><VTrack><Arrow dir="up" /><VThumb /><Arrow dir="down" /></VTrack></VScroll>
    <GridPane>
      <Grid dir="rtl">
        <colgroup>
          <Col $w={22} /><Col $w={152} /><Col $w={142} /><Col $w={293} /><Col $w={389} /><Col $w={106} /><Col />
        </colgroup>
        <thead>
          <tr>
            <Letter aria-label="Select all"><svg width="10" height="10" viewBox="0 0 10 10"><path d="M0 1v8h9z" fill="#dad7da" /></svg></Letter>
            {letters.map((l) => <Letter key={l} $on={l === "D"}>{l}</Letter>)}
          </tr>
        </thead>
        <tbody>
          <tr>
            <Num>1</Num>
            {letters.map((l) => <Cell key={l} $tone="red" $frozen={l === "C"} />)}
          </tr>
          <tr>
            <Num>2</Num>
            {heads.map((h, i) => <Cell key={i} $tone="head" $large={h.large} $frozen={i === 2}>{h.text}</Cell>)}
          </tr>
          <tr>
            <Num>3</Num>
            {notes.map((n, i) => (
              <Cell key={i} $tone="note" $large={n.large} $top={n.top} $frozen={i === 2}>
                {n.lines.map((t) => <TextLine key={t.text} $kind={t.kind}>{t.text}</TextLine>)}
              </Cell>
            ))}
          </tr>
          <tr>
            <Num />
            {letters.map((l) => <Cell key={l} $tone="gap" $frozen={l === "C"} />)}
          </tr>
          <tr>
            <Num $on>10</Num>
            {record.map((t, i) => (
              <Cell key={i} $tone="plain" $frozen={i === 2}>{t}{i === 3 && <Selection />}</Cell>
            ))}
          </tr>
          {emptyRows.map((n) => (
            <tr key={n}>
              <Num>{n}</Num>
              {letters.map((l) => (
                <Cell key={l} $tone="plain" $frozen={l === "C"}>
                  {n === 11 && l === "D" && (
                    <Pointer width="17" height="17" viewBox="0 0 17 17"><path d="M6 1.500h5v4.500h4.500v5H11v4.500H6V11H1.500V6H6z" fill="#fff" stroke="#111" strokeWidth="1.5" /></Pointer>
                  )}
                </Cell>
              ))}
            </tr>
          ))}
        </tbody>
      </Grid>
    </GridPane>
  </Sheet>
);

const FaceIcon = () => (
  <Icon w={20} h={20} sw={1.4}><path d="M12.500 2.300A8 8 0 1017.600 8M16.500 .5v6M13.500 3.500h6M6 12q3.500 4 7 0" /><path d="M6.500 7v2M12 7v2" strokeWidth="1.8" /></Icon>
);
const HandIcon = () => (
  <Icon w={14} h={20} sw={1.3}>
    <path d="M2 10V5q1.300-2 2.500 0V3q1.300-2 2.500 0 1.300-2 2.600 0v2q1.300-2 2.600 0v5z" fill="#aaa" stroke="none" />
    <path d="M2 10V5q1.300-2 2.500 0V3q1.300-2 2.500 0 1.300-2 2.600 0v2q1.300-2 2.600 0v8q0 5.500-5 5.500-5.200 0-5.200-5zM12 10q-3 1-3 4" />
    <path d="M4.500 4v5M7 3v6M9.600 4v5" strokeWidth=".8" />
  </Icon>
);

export default function App() {
  return (
    <Page>
      <GlobalStyle />
      <SharedScreen>
        <TitleBar>
          <TitleSide>
            <ExcelLogo s={12} />
            <AutoSave>AutoSave<HiddenCheck type="checkbox" /><Toggle>Off</Toggle></AutoSave>
            <IconButton $w={16} aria-label="Save"><Icon w={12} h={12}><path d="M.5 .5h11v11H.5z" fill="#dfa3e6" stroke="#8e3a9c" /><path d="M3 .5h6v4H3zM3 7.500h6v4H3z" fill="#fff" stroke="#8e3a9c" /></Icon></IconButton>
            <IconButton $w={22} aria-label="Undo"><Icon w={11} h={12} sw={1.2}><path d="M1 1v4.500h4.500M1 5.500Q5 0 9 3t-1 6l-2 2" /></Icon></IconButton>
            <IconButton $w={6}><Chev /></IconButton>
            <IconButton $w={20} $dim aria-label="Redo"><Icon w={11} h={12} sw={1.2}><path d="M10 1v4.500H5.500M10 5.500Q6 0 2 3t1 6l2 2" /></Icon></IconButton>
            <IconButton $w={6} $dim><Chev /></IconButton>
            <IconButton $w={24} aria-label="Customize"><Icon w={5} h={6}><path d="M0 .5h5M.5 3l2 2 2-2" /></Icon></IconButton>
            <FileName>سجل أصول البيانات-V2.1</FileName>
            <LabelButton>
              <svg width="10" height="12" viewBox="0 0 10 12"><path d="M5 .5q2 1.500 4.500 1.500Q10 9 5 11.500 0 9 .5 2 3 2 5 .5z" fill="#f7630c" stroke="#a8501c" /></svg>
              Confidential - EUO <Chev w={7} />
            </LabelButton>
          </TitleSide>
          <SearchBox>
            <Icon w={10} h={10}><circle cx="6" cy="4" r="3.300" stroke="#555" /><path d="M3.500 6.500L.5 9.500" stroke="#555" /></Icon>
            <input placeholder="Search" aria-label="Search" />
          </SearchBox>
          <TitleSide $end>
            <IconButton $w={32} aria-label="Account"><svg width="17" height="17" viewBox="0 0 17 17"><circle cx="8.500" cy="8.500" r="8.500" fill="#cfcccf" /><circle cx="8.500" cy="6.500" r="2.500" fill="none" stroke="#777" /><path d="M4.500 13.500q0-4 4-4t4 4" fill="none" stroke="#777" /></svg></IconButton>
            <IconButton $w={33} aria-label="Minimize"><Icon w={7} h={7}><path d="M0 3.500h7" /></Icon></IconButton>
            <IconButton $w={32} aria-label="Restore"><Icon w={7} h={7}><path d="M.5 1.500h5v5h-5zM2 .5h4.500V5" stroke="#333" /></Icon></IconButton>
            <IconButton $w={32} aria-label="Close"><Icon w={8} h={8}><path d="M.5 .5l7 7M7.500 .5l-7 7" /></Icon></IconButton>
          </TitleSide>
        </TitleBar>
        <TabRow>
          {ribbonTabs.map((t) => <RibbonTab key={t} $active={t === "Home"}>{t}</RibbonTab>)}
          <CornerActions>
            <CornerButton><Icon w={8} h={8}><path d="M.5 .5h7v5H4L2 7.500v-2H.5z" /></Icon>Comments</CornerButton>
            <CornerButton $dim><Icon w={8} h={8}><path d="M2 2.500H.5v5h6V6M2 5q0-3 3-3V.5L7.500 3 5 5V3.500" /></Icon>Share<Chev /></CornerButton>
          </CornerActions>
        </TabRow>
        <Toolbar />
        <FormulaBar>
          <BarBox $w={69}><NameInput aria-label="Name box" defaultValue="D10" /><Chev w={8} /></BarBox>
          <IconButton $w={14}><Icon w={2} h={9}><path d="M1 0v1.500M1 3.500v1.500M1 7v1.500" strokeWidth="1.5" /></Icon></IconButton>
          <BarBox $w={58}>
            <IconButton $w={9} aria-label="Cancel"><Icon w={9} h={9} sw={1.2}><path d="M.5 .5l8 8M8.500 .5l-8 8" stroke="#e5716e" /></Icon></IconButton>
            <IconButton $w={24} aria-label="Enter"><Icon w={11} h={9}><path d="M.5 5l3 3 7-7.500" stroke="#3f9468" strokeWidth="1.2" /></Icon></IconButton>
            <IconButton $w={9} aria-label="Insert function"><Glyph $serif $i $size={12}>fx</Glyph></IconButton>
            <IconButton $w={12} $dim><Chev w={7} /></IconButton>
          </BarBox>
          <IconButton $w={3} />
          <BarBox>
            <FormulaInput dir="rtl" aria-label="Formula" defaultValue="أسماء الموظفين , أرقام هويات, تاريخ توظيف" /><Chev w={7} />
          </BarBox>
        </FormulaBar>
        <Spreadsheet />
        <SheetBar>
          <HTrack><Arrow dir="left" /><HThumb /><Arrow dir="right" /></HTrack>
          <IconButton $w={20}><Icon w={2} h={9}><path d="M1 0v1.500M1 3.500v1.500M1 7v1.500" strokeWidth="1.5" /></Icon></IconButton>
          <SheetTabs>
            <IconButton $w={71} aria-label="New sheet"><Icon w={8} h={8}><path d="M4 0v8M0 4h8" strokeWidth=".8" /></Icon></IconButton>
            <SheetTab $active $w={65}><span>سجل البيانات</span></SheetTab>
            <SheetTab $w={56}>الإرشادات</SheetTab>
            <SheetTab $w={78} $last>سجل الإصدارات</SheetTab>
            <SheetArrows>
              <IconButton $w={22} $dim aria-label="Previous sheet"><Icon w={6} h={8}><path d="M5 0L1 4l4 4" /></Icon></IconButton>
              <IconButton $w={22} $dim aria-label="Next sheet"><Icon w={6} h={8}><path d="M1 0l4 4-4 4" /></Icon></IconButton>
            </SheetArrows>
          </SheetTabs>
        </SheetBar>
        <StatusBar>
          <span>Enter</span>
          <StatusItem $ml={14}><Icon w={10} h={10}><circle cx="4" cy="1.500" r="1" /><path d="M0 3l3 1h2l3-1M3 4v3L1.500 10M5 4v3M5.500 6l4 4M9.500 6l-4 4" /></Icon>Accessibility: Investigate</StatusItem>
          <StatusEnd>
            <StatusItem $strong><Icon w={10} h={9}><path d="M3 7.500H.5v-6h9V4M1.500 8h2" /><circle cx="7" cy="6.500" r="2" fill="#555" /></Icon>Display Settings</StatusItem>
            <IconButton $w={48} $h={12} $dim aria-label="Normal view"><Icon w={9} h={9}><path d="M.5 .5h8v8h-8zM.5 3.500h8M.5 6h8M3.500 .5v8M6 .5v8" /></Icon></IconButton>
            <IconButton $w={10} $h={12} $dim aria-label="Page layout"><Icon w={9} h={9}><path d="M.5 .5h8v8h-8zM2.500 2.500h4v4h-4zM3 4.500h3" /></Icon></IconButton>
            <IconButton $w={40} $h={12} $dim aria-label="Page break"><Icon w={10} h={9}><path d="M.5 .5h9v8h-9zM3.500 .5v4M6.500 .5v4M.5 4.500h6" /></Icon></IconButton>
            <IconButton $w={7} $h={12} $dim aria-label="Zoom out"><Icon w={5} h={5}><path d="M0 2.500h5" /></Icon></IconButton>
            <ZoomRange type="range" aria-label="Zoom" />
            <IconButton $w={12} $h={12} $dim aria-label="Zoom in"><Icon w={5} h={5}><path d="M0 2.500h5M2.500 0v5" /></Icon></IconButton>
            <StatusItem $ml={4}>118%</StatusItem>
          </StatusEnd>
        </StatusBar>
        <Taskbar>
          <Weather>
            <svg width="19" height="22" viewBox="0 0 19 22"><defs><linearGradient id="sun" x1="0" y1="0" x2="0" y2="1"><stop stopColor="#f6b22d" /><stop offset="1" stopColor="#e8641c" /></linearGradient></defs><circle cx="8.500" cy="13" r="7" fill="url(#sun)" /><circle cx="13" cy="6" r="5" fill="#f78f98" /><text x="13" y="9" fontSize="8" textAnchor="middle" fill="#301015">3</text></svg>
            <span>80°F<br />Sunny</span>
          </Weather>
          <Dock>
            <DockButton aria-label="Start">{dockIcons.start}</DockButton>
            <TaskSearch><Icon w={11} h={11} sw={1.3}><circle cx="4.500" cy="4.500" r="3.500" /><path d="M7 7l3.500 3.500" /></Icon><input placeholder="Search" aria-label="Search Windows" /></TaskSearch>
            <DockButton aria-label="Task view">{dockIcons.tasks}</DockButton>
            <DockButton aria-label="Copilot">{dockIcons.copilot}</DockButton>
            <DockButton aria-label="Files">{dockIcons.folder}</DockButton>
            <DockButton $run aria-label="Edge">{dockIcons.edge}</DockButton>
            <DockButton aria-label="Store">{dockIcons.store}</DockButton>
            <DockButton aria-label="Mail">{dockIcons.mailNew}</DockButton>
            <DockButton $run aria-label="Outlook">{dockIcons.outlook}</DockButton>
            <DockButton $run aria-label="Teams">{dockIcons.teams}</DockButton>
            <DockButton $run aria-label="OneNote">{dockIcons.onenote}</DockButton>
            <DockButton $run aria-label="PowerPoint">{dockIcons.powerpoint}</DockButton>
            <DockButton $on aria-label="Excel"><ExcelLogo s={17} /></DockButton>
            <DockButton $run aria-label="Webex">{dockIcons.webex}</DockButton>
          </Dock>
          <Clock>10:31 AM<br />12/4/2025</Clock>
        </Taskbar>
      </SharedScreen>
      <CallBar>
        <Pill $w={40} $danger aria-label="Leave"><Icon w={14} h={14} sw={1.3}><path d="M.5 .5l13 13M13.500 .5l-13 13" /></Icon></Pill>
        <Pill $w={40} aria-label="More"><svg width="14" height="4" viewBox="0 0 14 4" fill="#ddd"><circle cx="2" cy="2" r="1" /><circle cx="7" cy="2" r="1" /><circle cx="12" cy="2" r="1" /></svg></Pill>
        <Pill $w={137} $tight><FaceIcon /><PillRule />رفع اليد<HandIcon /></Pill>
        <Pill $w={101} $tight>تسجيل<Icon w={18} h={18} sw={1.4}><circle cx="9" cy="9" r="8" /><circle cx="9" cy="9" r="3" fill="#f0505c" stroke="none" /></Icon></Pill>
        <Pill $w={105}>مشاركة<Icon w={18} h={16} sw={1.4}><rect x="1" y="1.500" width="16" height="13" rx="2.500" /><path d="M9 11.500v-6M6.500 7.500L9 5l2.500 2.500" /></Icon></Pill>
        <Pill $w={141}><Chev w={10} />بدء الفيديو<Icon w={19} h={17} sw={1.3}><path d="M4 2.500h7q2 0 2 2v8q0 2-2 2H3q-2 0-2-2v-8q0-2 2-2M13 7l4-2.500v8L13 10M1 0l16 16.500" stroke="#e8505e" /></Icon></Pill>
        <Pill $w={138}><Chev w={10} />إلغاء الكتم<Icon w={18} h={18} sw={1.3}><path d="M6 4q0-3.500 3-3.500T12 4v5q0 3-3 3T6 9zM3.500 8q0 6 5.500 6t5.500-6M9 14v3M5.500 17.300h7M1 1l15.500 15.500" stroke="#e8505e" /></Icon></Pill>
        <Expand aria-label="Show panel"><Chev w={11} /></Expand>
      </CallBar>
    </Page>
  );
}
